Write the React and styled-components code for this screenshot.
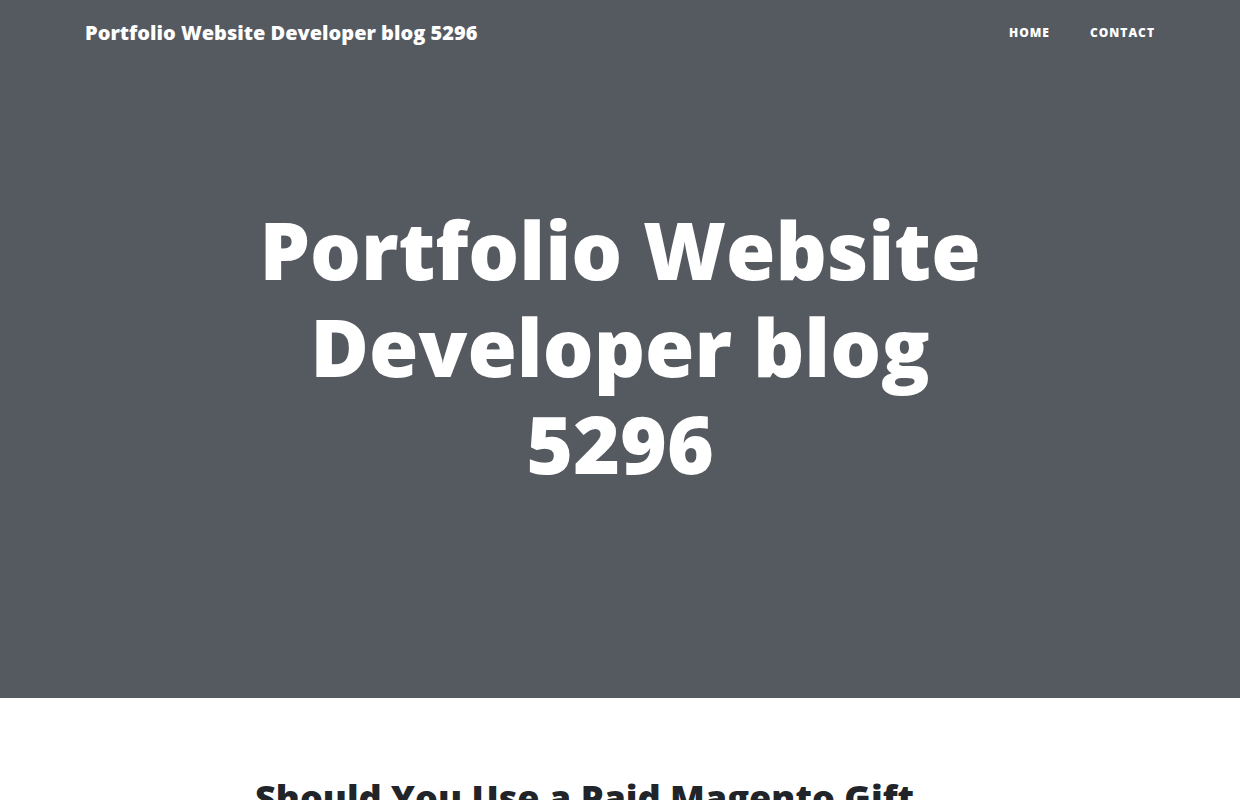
import styled, { createGlobalStyle } from 'styled-components';

const GlobalStyle = createGlobalStyle`
    body {
        margin: 0;
        font-family: "Open Sans", "Liberation Sans", sans-serif;
        color: #212529;
        background: #fff;
    }
    * { box-sizing: border-box; }
`;

const Masthead = styled.header`
    background: #555960;
    color: #fff;
`;

const NavBar = styled.nav`
    height: 66px;
    padding: 0 85px;
    display: flex;
    align-items: center;
    justify-content: space-between;
`;

const Brand = styled.a`
    font-size: 20px;
    font-weight: 800;
    color: #fff;
    text-decoration: none;
    margin-top: -1px;
`;

const NavList = styled.ul`
    display: flex;
    list-style: none;
    margin: 0;
    padding: 0;
    margin-right: -20px;
`;

const NavLink = styled.a`
    display: block;
    padding: 0 20px;
    margin-top: -1px;
    font-size: 12px;
    font-weight: 800;
    letter-spacing: 1px;
    text-transform: uppercase;
    color: #fff;
    text-decoration: none;
`;

const Heading = styled.div`
    width: 730px;
    margin: 0 auto;
    padding: 134px 0 207px;
    text-align: center;
`;

const HeroTitle = styled.h1`
    margin: 0;
    font-size: 80px;
    line-height: 97px;
    font-weight: 800;
`;

const Main = styled.main`
    width: 730px;
    margin: 0 auto;
    padding-top: 78px;
`;

const PostTitle = styled.h2`
    margin: 0 0 10px;
    font-size: 36px;
    line-height: 1.2;
    font-weight: 800;
    color: #212529;
`;

export default function App() {
    return <>
        <GlobalStyle />
        <Masthead>
            <NavBar>
                <Brand href="#">Portfolio Website Developer blog 5296</Brand>
                <NavList>
                    <li><NavLink href="#">Home</NavLink></li>
                    <li><NavLink href="#">Contact</NavLink></li>
                </NavList>
            </NavBar>
            <Heading>
                <HeroTitle>Portfolio Website Developer blog 5296</HeroTitle>
            </Heading>
        </Masthead>
        <Main>
            <PostTitle>Should You Use a Paid Magento Gift Card Extension?</PostTitle>
        </Main>
    </>
}
